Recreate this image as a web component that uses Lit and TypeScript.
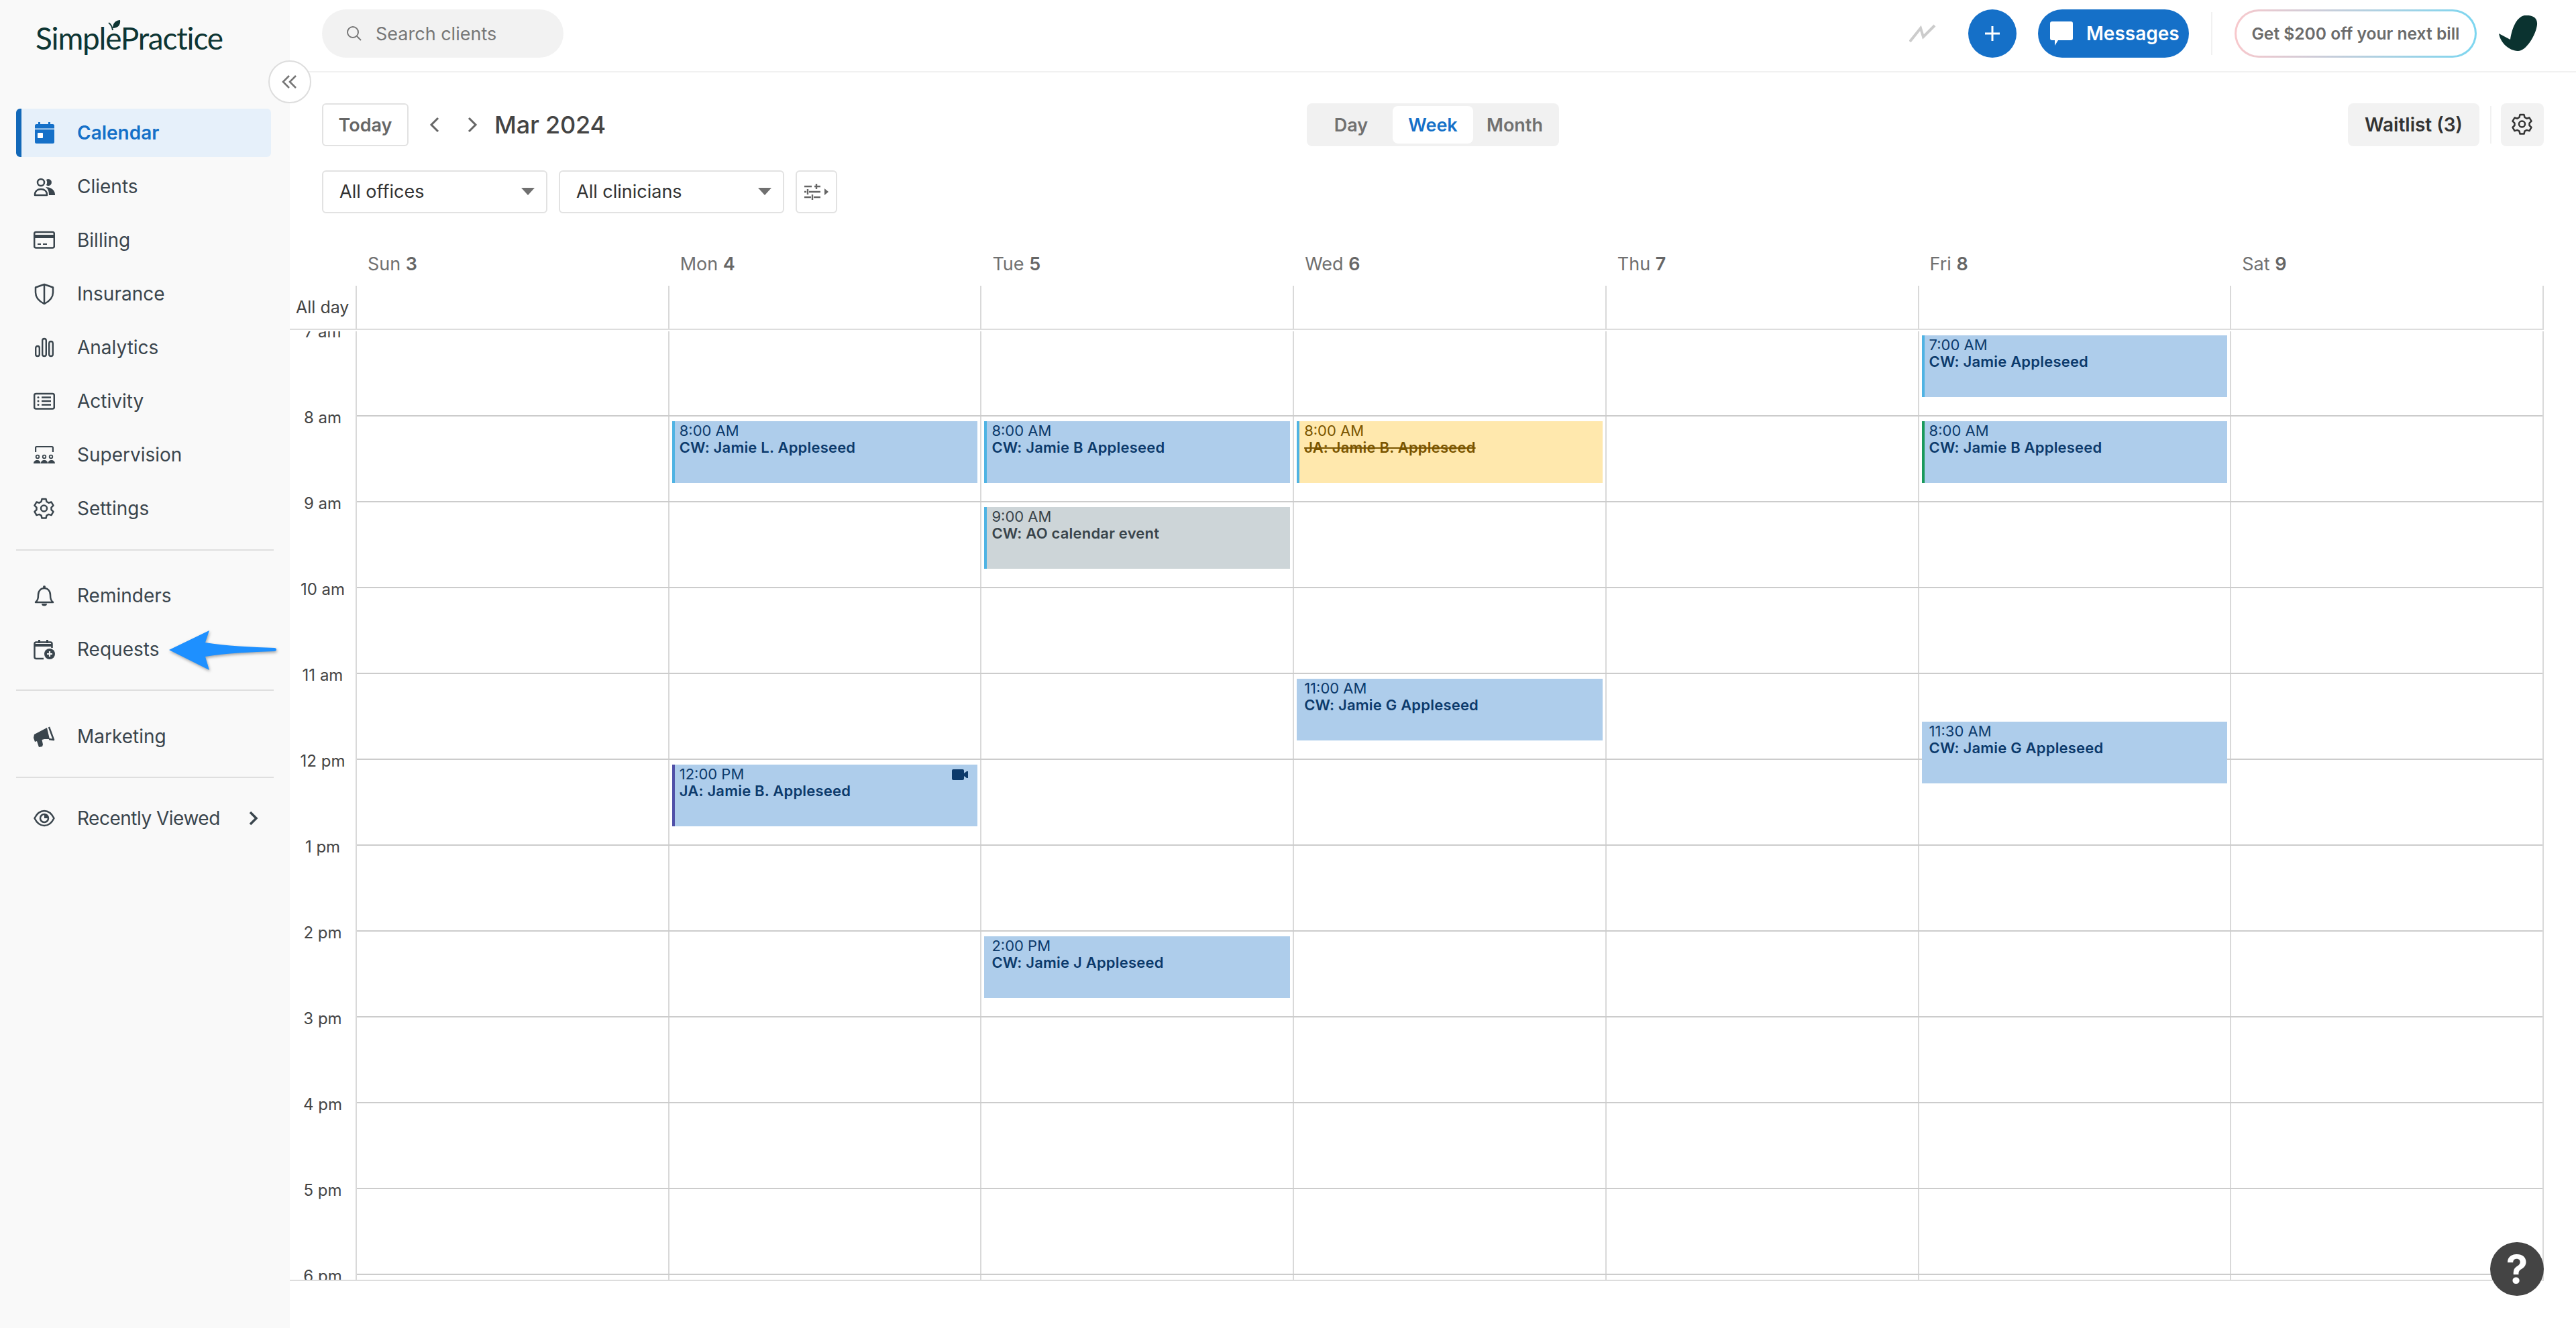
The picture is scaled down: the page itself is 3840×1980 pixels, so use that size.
import { LitElement, html, css, svg } from "lit";
import { customElement } from "lit/decorators.js";

const GEAR = svg`<path d="M12.500 2h6l1 4 3 1.700 4-1.200 3 5.200-3 2.900v3.400l3 2.900-3 5.200-4-1.200-3 1.700-1 4h-6l-1-4-3-1.700-4 1.200-3-5.200 3-2.900v-3.400l-3-2.900 3-5.200 4 1.200 3-1.700Z" fill="none" stroke="currentColor" stroke-width="2.500" stroke-linejoin="round"/><circle cx="15.500" cy="16" r="4.500" fill="none" stroke="currentColor" stroke-width="2.500"/>`;

const I: Record<string, any> = {
  calendar: svg`<path d="M7 0h3v3h12V0h3v3h3.500A2.500 2.500 0 0 1 31 5.500V9.500H2V5.500A2.500 2.500 0 0 1 4.500 3H7Z" fill="currentColor"/><path d="M2 11h29v18.500a2.500 2.500 0 0 1-2.500 2.500H4.500A2.500 2.500 0 0 1 2 29.500Z" fill="currentColor"/><rect x="6" y="16" width="8" height="8" rx="1" fill="#fff"/>`,
  clients: svg`<circle cx="11" cy="10" r="5" fill="none" stroke="currentColor" stroke-width="2.500"/><path d="M22 5a5 5 0 1 1-3 9 8 8 0 0 0 0-8 5 5 0 0 1 3-1ZM18 17c6 0 14 3 14 11v1H23c0-5-1-9-5-12Z" fill="currentColor"/><path d="M2 29v-1c0-5 4-8 9-8s9 3 9 8v1Z" fill="none" stroke="currentColor" stroke-width="2.500" stroke-linejoin="round"/>`,
  billing: svg`<rect x="1.200" y="4" width="29.600" height="23.500" rx="2.500" fill="none" stroke="currentColor" stroke-width="2.500"/><rect x="2" y="8" width="28" height="5" fill="currentColor"/><path d="M6 22h5M14 22h6" stroke="currentColor" stroke-width="2"/>`,
  insurance: svg`<path d="M16 2 29 6.500V14c0 8-5 13-13 17C8 27 3 22 3 14V6.500Z" fill="none" stroke="currentColor" stroke-width="2.500" stroke-linejoin="round"/><path d="M16 2v29" stroke="currentColor" stroke-width="2.500"/>`,
  analytics: svg`<rect x="3.200" y="14" width="5.600" height="15" rx="2.800" fill="none" stroke="currentColor" stroke-width="2.400"/><rect x="13.200" y="3" width="5.600" height="26" rx="2.800" fill="none" stroke="currentColor" stroke-width="2.400"/><rect x="23.200" y="7" width="5.600" height="22" rx="2.800" fill="none" stroke="currentColor" stroke-width="2.400"/>`,
  activity: svg`<rect x="1.200" y="5" width="29.600" height="22.500" rx="2.500" fill="none" stroke="currentColor" stroke-width="2.500"/><path d="M12 10.500h14M12 16h14M12 21.500h14" stroke="currentColor" stroke-width="2.400"/><circle cx="7" cy="10.500" r="1.500" fill="currentColor"/><circle cx="7" cy="16" r="1.500" fill="currentColor"/><circle cx="7" cy="21.500" r="1.500" fill="currentColor"/>`,
  supervision: svg`<path d="M3.100 12V5.500A1.500 1.500 0 0 1 4.600 4h22.800a1.500 1.500 0 0 1 1.500 1.500V12" fill="none" stroke="currentColor" stroke-width="2.200"/><circle cx="6" cy="19" r="2.300" fill="none" stroke="currentColor" stroke-width="1.800"/><circle cx="16" cy="19" r="2.300" fill="none" stroke="currentColor" stroke-width="1.800"/><circle cx="26" cy="19" r="2.300" fill="none" stroke="currentColor" stroke-width="1.800"/><path d="M0 29c0-3 2.400-5 5.500-5s5 2 5 5ZM10.800 29c0-3 2.200-5 5.200-5s5.200 2 5.200 5ZM21.500 29c0-3 1.900-5 5-5s5.500 2 5.500 5Z" fill="currentColor"/>`,
  settings: GEAR,
  reminders: svg`<path d="M3 26c3-3 4-5 4-11 0-6 4-10 9-10s9 4 9 10c0 6 1 8 4 11Z" fill="none" stroke="currentColor" stroke-width="2.500" stroke-linejoin="round"/><circle cx="16" cy="3" r="2" fill="currentColor"/><path d="M12 28h8a4 3.500 0 0 1-8 0Z" fill="currentColor"/>`,
  requests: svg`<path d="M15 30H4a2.500 2.500 0 0 1-2.500-2.500V8A2.500 2.500 0 0 1 4 5.500h21A2.500 2.500 0 0 1 27.500 8v6" fill="none" stroke="currentColor" stroke-width="2.500"/><path d="M2 8h25v4H2ZM7 2h3v5H7ZM19 2h3v5h-3Z" fill="currentColor"/><circle cx="24" cy="23" r="8" fill="currentColor"/><path d="M24 19v8M20 23h8" stroke="#f9f9f9" stroke-width="2.200"/>`,
  marketing: svg`<path d="M1 13 20 3l4 17-8 0-3.500 1 1.500 7-1 3-5 1-3-9-3 1-2-6Z" fill="currentColor"/><path d="M23 2 30 21l-7-1" fill="none" stroke="currentColor" stroke-width="2.500" stroke-linejoin="round"/>`,
  eye: svg`<path d="M1.500 16C5 9 10 5 16 5s11 4 14.500 11C27 23 22 27 16 27S5 23 1.500 16Z" fill="none" stroke="currentColor" stroke-width="2.500" stroke-linejoin="round"/><circle cx="16" cy="16" r="6" fill="none" stroke="currentColor" stroke-width="2.500"/><path d="M16 10a6 6 0 0 1 6 6h-6Z" fill="currentColor"/>`,
};

type Nav = { l: string; i: string; active?: boolean; more?: boolean };
const GROUPS: Nav[][] = [
  [
    { l: "Calendar", i: "calendar", active: true },
    { l: "Clients", i: "clients" },
    { l: "Billing", i: "billing" },
    { l: "Insurance", i: "insurance" },
    { l: "Analytics", i: "analytics" },
    { l: "Activity", i: "activity" },
    { l: "Supervision", i: "supervision" },
    { l: "Settings", i: "settings" },
  ],
  [
    { l: "Reminders", i: "reminders" },
    { l: "Requests", i: "requests" },
  ],
  [{ l: "Marketing", i: "marketing" }],
  [{ l: "Recently Viewed", i: "eye", more: true }],
];

const DAYS = [["Sun", "3"], ["Mon", "4"], ["Tue", "5"], ["Wed", "6"], ["Thu", "7"], ["Fri", "8"], ["Sat", "9"]];
const HOURS = ["7 am", "8 am", "9 am", "10 am", "11 am", "12 pm", "1 pm", "2 pm", "3 pm", "4 pm", "5 pm", "6 pm"];

type Ev = { day: number; start: number; time: string; name: string; kind?: string; bar?: string; video?: boolean };
const EVENTS: Ev[] = [
  { day: 1, start: 1, time: "8:00 AM", name: "CW: Jamie L. Appleseed", bar: "#4fb3e3" },
  { day: 1, start: 5, time: "12:00 PM", name: "JA: Jamie B. Appleseed", bar: "#5050a8", video: true },
  { day: 2, start: 1, time: "8:00 AM", name: "CW: Jamie B Appleseed", bar: "#4fb3e3" },
  { day: 2, start: 2, time: "9:00 AM", name: "CW: AO calendar event", kind: "grey", bar: "#4fb3e3" },
  { day: 2, start: 7, time: "2:00 PM", name: "CW: Jamie J Appleseed", bar: "#aecdeb" },
  { day: 3, start: 1, time: "8:00 AM", name: "JA: Jamie B. Appleseed", kind: "yellow", bar: "#4fb3e3" },
  { day: 3, start: 4, time: "11:00 AM", name: "CW: Jamie G Appleseed", bar: "#aecdeb" },
  { day: 4, start: 11, time: "", name: "", bar: "#4fb3e3" },
  { day: 5, start: 0, time: "7:00 AM", name: "CW: Jamie Appleseed", bar: "#4fb3e3" },
  { day: 5, start: 1, time: "8:00 AM", name: "CW: Jamie B Appleseed", bar: "#1a9a5c" },
  { day: 5, start: 4.5, time: "11:30 AM", name: "CW: Jamie G Appleseed", bar: "#aecdeb" },
];

@customElement("app-root")
export class AppRoot extends LitElement {
  static styles = css`
    :host {
      display: flex;
      position: relative;
      width: 3840px;
      height: 1980px;
      overflow: hidden;
      background: #fff;
      font-family: Inter, "Liberation Sans", sans-serif;
      color: #333;
    }
    * { box-sizing: border-box; }
    svg { display: block; flex: none; }

    /* sidebar */
    .side { width: 432px; flex: none; background: #f9f9f9; padding-left: 24px; }
    .logo { height: 158px; position: relative; }
    .logo span {
      position: absolute; left: 29px; top: 25px;
      font: 400 46px/64px Lato, sans-serif; letter-spacing: -1.2px; color: #0e3533;
    }
    .logo svg { position: absolute; left: 137px; top: 29px; }
    .item {
      width: 380px; height: 80px; display: flex; align-items: center;
      padding-left: 26px; gap: 33px; font-size: 28px; color: #3a454d; white-space: nowrap;
    }
    .item.more span { letter-spacing: -0.5px; }
    .item .chev { margin-left: 9px; }
    .item.active { color: #1570c8; font-weight: 600; position: relative; }
    .item.active::before {
      content: ""; position: absolute; z-index: 0; left: 0; right: 0; top: 4px; bottom: 4px;
      background: #e6f0fa; border-left: 8px solid #1268b8; border-radius: 6px;
    }
    .item.active > * { position: relative; z-index: 1; }
    .rule { width: 384px; height: 2px; background: #dfdfdf; margin: 20px 0; }
    .rule.first { margin: 21px 0 27px; }
    .rule.second { margin: 20px 0 28px; }

    /* main */
    .main { flex: 1; min-width: 0; display: flex; flex-direction: column; }
    .top {
      height: 108px; border-bottom: 2px solid #f1f1f1; display: flex; align-items: center;
      padding: 0 57px 6px 48px;
    }
    .search {
      width: 360px; height: 72px; border-radius: 36px; background: #f2f2f2;
      display: flex; align-items: center; padding-left: 36px; gap: 20px; color: #777; font-size: 27px;
    }
    .spacer { flex: 1; }
    .plus {
      width: 72px; height: 72px; border-radius: 50%; background: #1570c8; margin-left: 48px;
      display: flex; align-items: center; justify-content: center;
    }
    .msg {
      width: 225px; height: 72px; border-radius: 36px; background: #1570c8; color: #fff; margin-left: 32px;
      display: flex; align-items: center; padding-left: 18px; gap: 20px; font-size: 28px; font-weight: 600;
    }
    .vr { width: 2px; height: 64px; background: #f1f1f1; margin: 0 33px; }
    .promo {
      width: 361px; height: 72px; border-radius: 36px; border: 3px solid transparent;
      background: linear-gradient(#fff, #fff) padding-box, linear-gradient(90deg, #f8c8cc, #7cd6f0) border-box;
      display: flex; align-items: center; justify-content: center; font-size: 24.6px; font-weight: 600; color: #6b6b6b;
    }
    .leaf { margin-left: 33px; }

    .bar { height: 64px; margin: 46px 48px 0; display: flex; align-items: center; }
    .today {
      width: 129px; height: 64px; border: 2px solid #e2e2e2; border-radius: 6px;
      display: flex; align-items: center; justify-content: center; color: #666; font-size: 27px; font-weight: 600;
    }
    .nav { margin-left: 31px; }
    .nav.next { margin-left: 40px; }
    .month { margin-left: 25px; font-size: 36px; font-weight: 500; color: #444; letter-spacing: -0.2px; }
    .seg {
      position: absolute; left: 1948px; top: 154px; width: 376px; height: 64px; padding: 4px;
      background: #f1f1f1; border-radius: 8px; display: flex; font-size: 27px; font-weight: 600; color: #707070;
    }
    .seg span { width: 124px; display: flex; align-items: center; justify-content: center; border-radius: 8px; }
    .seg .on { width: 120px; background: #fff; color: #1570c8; }
    .wait {
      width: 196px; height: 64px; background: #f2f2f2; border-radius: 8px; margin-left: auto;
      display: flex; align-items: center; justify-content: center; font-size: 28px; font-weight: 600; color: #333;
    }
    .vr2 { width: 2px; height: 56px; background: #f1f1f1; margin: 0 14px 0 16px; }
    .gear {
      width: 64px; height: 64px; background: #f2f2f2; border-radius: 8px; color: #333;
      display: flex; align-items: center; justify-content: center;
    }

    .filters { height: 64px; margin: 36px 48px 0; display: flex; gap: 17px; }
    .select {
      width: 336px; height: 64px; border: 2px solid #e2e2e2; border-radius: 6px;
      display: flex; align-items: center; justify-content: space-between; padding: 0 17px 2px 24px;
      font-size: 27px; color: #333;
    }
    .tri { width: 0; height: 0; border-left: 10px solid transparent; border-right: 10px solid transparent; border-top: 11px solid #707070; }
    .fbtn {
      width: 62px; height: 64px; border: 2px solid #e2e2e2; border-radius: 6px; color: #666;
      display: flex; align-items: center; justify-content: center;
    }

    .cal { width: 3360px; }
    .heads { height: 108px; display: grid; grid-template-columns: 98px repeat(7, 1fr); padding-right: 2px; }
    .heads div { padding: 59px 0 0 18px; font-size: 27px; line-height: 34px; color: #707070; }
    .heads b { font-weight: 600; color: #666; }
    .allday {
      height: 66px; border-bottom: 2px solid #ddd; padding-right: 2px;
      display: grid; grid-template-columns: 98px repeat(7, 1fr);
    }
    .allday .lab { font-size: 25px; color: #444; display: flex; align-items: center; padding: 0 0 0 9px; white-space: nowrap; }
    .allday .c { border-left: 2px solid #d9d9d9; }
    .allday .c:last-child { border-right: 2px solid #d9d9d9; margin-right: -2px; }
    .body {
      height: 1416px; margin-top: 2px; overflow: hidden; border-bottom: 2px solid #ddd; padding-right: 2px;
    }
    .grid { margin-top: -3px; display: grid; grid-template-columns: 98px repeat(7, 1fr); }
    .gut { position: relative; margin-top: -64px; }
    .hour {
      height: 128px; display: flex; align-items: center; justify-content: center;
      font-size: 24px; padding: 6px 0 0 0; color: #444;
    }
    .col { position: relative; border-left: 2px solid #d9d9d9; }
    .col:last-child { border-right: 2px solid #d9d9d9; margin-right: -2px; }
    .cell { height: 128px; border-top: 2px solid #ccc; margin-left: -2px; position: relative; }
    .col.firstc .cell { margin-left: 0; }
    .ev {
      position: absolute; left: 4px; right: 4px; height: 92px; border-left: 4px solid;
      background: #aecdeb; color: #0c3a6b; padding: 2px 0 0 7px; font-size: 22px; line-height: 25px;
      overflow: hidden;
    }
    .ev b { display: block; font-weight: 600; letter-spacing: 0.2px; }
    .ev.grey { background: #cdd5d8; color: #39444b; }
    .ev.yellow { background: #ffe8ad; color: #7a5500; }
    .ev.yellow b { text-decoration: line-through; }
    .cam { position: absolute; right: 14px; top: 7px; }

    .collapse {
      position: absolute; left: 400px; top: 90px; width: 64px; height: 64px; border-radius: 50%;
      background: #fff; border: 2px solid #ddd; color: #777;
      display: flex; align-items: center; justify-content: center;
    }
    .arrow { position: absolute; left: 246px; top: 934px; filter: drop-shadow(1px 2px 2px rgba(0,0,0,.35)); }
    .help {
      position: absolute; left: 3712px; top: 1852px; width: 80px; height: 80px; border-radius: 50%;
      background: #444; color: #fff; display: flex; align-items: center; justify-content: center;
      font-size: 58px; font-weight: 700;
    }
  `;

  private icon(name: string) {
    return html`<svg width="32" height="32" viewBox="0 0 32 32">${I[name]}</svg>`;
  }

  render() {
    const rules = ["first", "second", ""];
    return html`
      <aside class="side">
        <div class="logo">
          <span>SimplePractice</span>
          <svg width="20" height="18" viewBox="0 0 20 18">
            <path d="M7 13C7 5 12 1 18 1c1 7-3 12-11 12Z" fill="#0e3533"/>
            <path d="M1 5c3 2 5 5 6 11" fill="none" stroke="#0e3533" stroke-width="2"/>
          </svg>
        </div>
        ${GROUPS.map((g, gi) => html`
          ${g.map((n) => html`
            <div class="item ${n.active ? "active" : ""} ${n.more ? "more" : ""}">
              ${this.icon(n.i)}
              <span>${n.l}</span>
              ${n.more ? html`<svg class="chev" width="16" height="24" viewBox="0 0 16 24"><path d="M3 3l9 9-9 9" fill="none" stroke="currentColor" stroke-width="3.500"/></svg>` : ""}
            </div>`)}
          ${gi < 3 ? html`<div class="rule ${rules[gi]}"></div>` : ""}
        `)}
      </aside>

      <div class="main">
        <header class="top">
          <div class="search">
            <svg width="24" height="24" viewBox="0 0 24 24"><circle cx="10" cy="10" r="8" fill="none" stroke="#777" stroke-width="2"/><path d="M16 16l6 6" stroke="#777" stroke-width="2"/></svg>
            <span>Search clients</span>
          </div>
          <div class="spacer"></div>
          <svg width="40" height="28" viewBox="0 0 40 28"><path d="M1 26 17 6l4 13L38 2" fill="none" stroke="#ccc" stroke-width="4"/></svg>
          <div class="plus"><svg width="24" height="24" viewBox="0 0 24 24"><path d="M12 1v22M1 12h22" stroke="#fff" stroke-width="3"/></svg></div>
          <div class="msg">
            <svg width="34" height="36" viewBox="0 0 34 36"><path d="M3 0h28a3 3 0 0 1 3 3v22a3 3 0 0 1-3 3H12L7 36v-8H3a3 3 0 0 1-3-3V3a3 3 0 0 1 3-3Z" fill="#fff"/></svg>
            <span>Messages</span>
          </div>
          <div class="vr"></div>
          <div class="promo">Get $200 off your next bill</div>
          <svg class="leaf" width="58" height="54" viewBox="0 0 58 54"><path d="M38 0C50-1 58 3 57 14 55 30 40 54 28 53 15 52 3 42 0 27L17 36C19 22 25 3 38 0Z" fill="#0b3330"/></svg>
        </header>

        <div class="bar">
          <div class="today">Today</div>
          <svg class="nav" width="16" height="24" viewBox="0 0 16 24"><path d="M13 2 3 12l10 10" fill="none" stroke="#666" stroke-width="3"/></svg>
          <svg class="nav next" width="16" height="24" viewBox="0 0 16 24"><path d="M3 2l10 10L3 22" fill="none" stroke="#666" stroke-width="3"/></svg>
          <div class="month">Mar 2024</div>
          <div class="seg"><span>Day</span><span class="on">Week</span><span>Month</span></div>
          <div class="wait">Waitlist (3)</div>
          <div class="vr2"></div>
          <div class="gear"><svg width="32" height="34" viewBox="0 0 32 34">${GEAR}</svg></div>
        </div>

        <div class="filters">
          <div class="select"><span>All offices</span><i class="tri"></i></div>
          <div class="select"><span>All clinicians</span><i class="tri"></i></div>
          <div class="fbtn">
            <svg width="38" height="24" viewBox="0 0 38 24">
              <path d="M1 4h11M16 4h9M19 0v8M1 12h3M8 12h17M6 8v8M1 20h10M15 20h10M13 16v8" stroke="currentColor" stroke-width="2.400" fill="none"/>
              <path d="M31 7l6 5-6 5Z" fill="currentColor"/>
            </svg>
          </div>
        </div>

        <section class="cal">
          <div class="heads">
            <span></span>
            ${DAYS.map(([d, n]) => html`<div>${d} <b>${n}</b></div>`)}
          </div>
          <div class="allday">
            <span class="lab">All day</span>
            ${DAYS.map(() => html`<span class="c"></span>`)}
          </div>
          <div class="body">
            <div class="grid">
              <div class="gut">${HOURS.map((h) => html`<div class="hour">${h}</div>`)}</div>
              ${DAYS.map((_, d) => html`
                <div class="col ${d === 0 ? "firstc" : ""}">
                  ${HOURS.map(() => html`<div class="cell"></div>`)}
                  ${EVENTS.filter((e) => e.day === d).map((e) => html`
                    <div class="ev ${e.kind ?? ""}" style="top:${e.start * 128 + 9}px;border-left-color:${e.bar}">
                      ${e.time}<b>${e.name}</b>
                      ${e.video ? html`<svg class="cam" width="24" height="16" viewBox="0 0 24 16"><rect width="18" height="16" rx="2" fill="currentColor"/><path d="M18 6l4-3h2v10h-2l-4-3Z" fill="currentColor"/></svg>` : ""}
                    </div>`)}
                </div>`)}
            </div>
          </div>
        </section>
      </div>

      <div class="collapse">
        <svg width="24" height="22" viewBox="0 0 24 22"><path d="M11 2 2 11l9 9M21 2l-9 9 9 9" fill="none" stroke="currentColor" stroke-width="2.600"/></svg>
      </div>
      <svg class="arrow" width="172" height="70" viewBox="0 0 172 70">
        <path d="M6 35 66 6l-6 18c30 5 70 7 103 8 4 0 4 5 0 5-33 1-73 3-103 8l6 20Z" fill="#1e90ff"/>
      </svg>
      <div class="help">?</div>
    `;
  }
}
